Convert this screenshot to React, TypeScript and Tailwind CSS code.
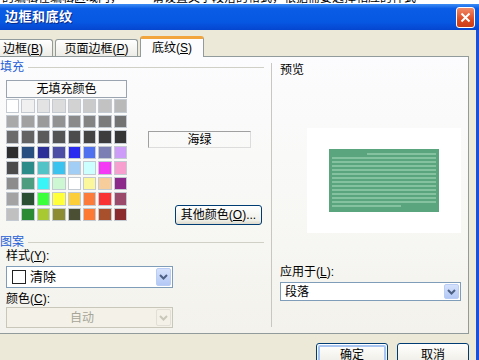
import React from 'react'

const font = "font-['Liberation_Sans','Noto_Sans_CJK_SC',sans-serif]"

// Word 2003 shading palette, 8 x 8
const palette = [
  ['#ffffff', '#f0f0f0', '#e3e3e3', '#dcdcdc', '#d2d2d2', '#cacaca', '#c2c2c2', '#b9b9b9'],
  ['#a9a9a9', '#a1a1a1', '#9a9a9a', '#929292', '#8a8a8a', '#838383', '#7b7b7b', '#737373'],
  ['#6b6b6b', '#636363', '#5b5b5b', '#545454', '#4c4c4c', '#444444', '#3d3d3d', '#353535'],
  ['#2d2d2d', '#284f7f', '#2b2f97', '#4c4ea5', '#2b2bef', '#4f71f0', '#7b7fb3', '#cc9cf8'],
  ['#4b4b4b', '#2b8b88', '#52c3c7', '#3ac3ef', '#a2cdf5', '#ccffff', '#f53af5', '#f7a0d0'],
  ['#8c8c8c', '#4f9d80', '#3af5f7', '#cdf7d2', '#ffffff', '#fbf79c', '#f7cd9c', '#8c2a8c'],
  ['#a3a3a3', '#2b4f33', '#3aff3a', '#ffff3a', '#fcce3a', '#fc7a3a', '#f93333', '#9c4a6c'],
  ['#c0c0c0', '#2b8b35', '#a9c933', '#8c8c33', '#4b4f33', '#fc7a33', '#a84f2b', '#8c2b2b'],
]

function Chevron({ color }: { color: string }) {
  return (
    <svg width="9" height="6" viewBox="0 0 9 6">
      <path d="M1 1 L4.5 4.5 L8 1" fill="none" stroke={color} strokeWidth="2" />
    </svg>
  )
}

function Combo({
  children,
  disabled,
  className,
}: {
  children: React.ReactNode
  disabled?: boolean
  className: string
}) {
  return (
    <div
      className={`shrink-0 flex items-stretch border p-[1px] ${
        disabled ? 'border-[#c9c7ba] bg-[#f3f1e8]' : 'border-[#7f9db9] bg-white'
      } ${className}`}
    >
      <div className="flex-1 flex items-center min-w-0">{children}</div>
      <div
        className={`w-[15px] flex items-center justify-center rounded-[2px] border ${
          disabled
            ? 'border-[#e2e0d6] bg-[#f3f1e8]'
            : 'border-[#b9cdf5] bg-[linear-gradient(to_bottom,#d6e2fc,#b3c8f5)]'
        }`}
      >
        <Chevron color={disabled ? '#c9c7ba' : '#4d6185'} />
      </div>
    </div>
  )
}

function GroupHeader({ label }: { label: string }) {
  return (
    <div className="shrink-0 flex items-center h-[14px]">
      <span className="text-[12px] leading-[14px] text-[#1f5fd6]">{label}</span>
      <div className="flex-1 h-px bg-[#d0d0c6] ml-[4px]" />
    </div>
  )
}

function XpButton({ children, isDefault }: { children: React.ReactNode; isDefault?: boolean }) {
  return (
    <div className="shrink-0 w-[72px] h-[23px] rounded-[3px] border border-[#003c74] bg-[linear-gradient(to_bottom,#ffffff,#f0efe8_80%,#dedbcf)] p-[1px]">
      <div
        className={`h-full rounded-[2px] flex items-center justify-center text-[12px] text-black ${
          isDefault ? 'border-2 border-[#a8c4f0]' : ''
        }`}
      >
        {children}
      </div>
    </div>
  )
}

export default function App() {
  return (
    <div className={`w-[479px] h-[360px] overflow-hidden flex flex-col bg-[#ece9d8] ${font}`}>
      {/* Document text behind the dialog, only its bottom edge shows */}
      <div className="shrink-0 h-[4px] bg-white overflow-hidden flex gap-[30px] pl-[2px]">
        <span className="text-[12px] leading-[12px] mt-[-8px] text-black whitespace-nowrap">
          的编辑在编辑区域内，
        </span>
        <span className="text-[12px] leading-[12px] mt-[-8px] text-black whitespace-nowrap">
          请设置文字段落的格式，根据需要选择相应的样式
        </span>
      </div>

      {/* Title bar */}
      <div className="shrink-0 h-[26px] flex items-center justify-between pl-[5px] pr-[4px] bg-[linear-gradient(to_bottom,#3d8df5_0%,#0a5ce6_18%,#0657e2_70%,#0545cf_100%)]">
        <span className="text-[13px] font-bold text-white tracking-[0.5px] [text-shadow:1px_1px_0_#0a2a8a]">
          边框和底纹
        </span>
        <div className="w-[19px] h-[21px] rounded-[3px] border border-white bg-[linear-gradient(to_bottom,#f08a68,#dd4a22_60%,#c83c18)] flex items-center justify-center">
          <svg width="11" height="11" viewBox="0 0 11 11">
            <path d="M1.5 1.5 L9.5 9.5 M9.5 1.5 L1.5 9.5" stroke="white" strokeWidth="2" />
          </svg>
        </div>
      </div>

      {/* Dialog body */}
      <div className="shrink-0 h-[330px] flex flex-col pt-[6px] pr-[7px] border-r-[3px] border-[#1b4fd8]">
        {/* Tabs */}
        <div className="shrink-0 flex items-end ml-[-4px] h-[21px]">
          <div className="w-[57px] h-[18px] rounded-t-[3px] border border-b-0 border-[#919b9c] bg-[linear-gradient(to_bottom,#ffffff,#ecebe5)] flex items-center pl-[6px] text-[12px] text-black">
            边框(<u>B</u>)
          </div>
          <div className="ml-[2px] w-[83px] h-[18px] rounded-t-[3px] border border-b-0 border-[#919b9c] bg-[linear-gradient(to_bottom,#ffffff,#ecebe5)] flex items-center justify-center text-[12px] text-black">
            页面边框(<u>P</u>)
          </div>
          <div className="relative z-10 ml-[2px] w-[64px] h-[21px] rounded-t-[3px] border-x border-[#919b9c] border-t-[3px] border-t-[#f1a53c] bg-[#fcfcfe] flex items-center justify-center text-[12px] text-black">
            底纹(<u>S</u>)
          </div>
        </div>

        {/* Tab panel */}
        <div className="shrink-0 mt-[-1px] ml-[-4px] h-[278px] border border-[#919b9c] bg-[linear-gradient(to_bottom,#fcfcfe,#f7f7f4_60%,#f3f2ec)] flex pl-[3px]">
          {/* Left: fill + pattern */}
          <div className="w-[272px] flex flex-col pr-[7px] pt-[3px]">
            <GroupHeader label="填充" />
            <div className="shrink-0 flex ml-[6px] mt-[6px]">
              <div className="w-[121px] flex flex-col">
                <div className="h-[18px] border border-[#9aa4b0] bg-[#fbfbfb] flex items-center justify-center text-[12px] text-black">
                  无填充颜色
                </div>
                <div className="mt-[1px] w-[121px] h-[122px] grid grid-cols-8 grid-rows-8 gap-[2px]">
                  {palette.flat().map((c, i) => (
                    <div
                      key={i}
                      className="border border-[#c4cad2]"
                      style={{ backgroundColor: c }}
                    />
                  ))}
                </div>
              </div>
              <div className="flex-1 flex flex-col pl-[21px]">
                <div className="mt-[51px] w-[103px] h-[17px] border border-[#a0a0a0] border-b-[#dcdcdc] border-r-[#dcdcdc] flex items-center justify-center text-[12px] text-black">
                  海绿
                </div>
                <div className="mt-[57px] self-end mr-[2px] w-[87px] h-[20px] rounded-[3px] border border-[#003c74] bg-[linear-gradient(to_bottom,#ffffff,#efeee7_80%,#dcd9cc)] flex items-center justify-center text-[12px] text-black whitespace-nowrap">
                  其他颜色(<u>O</u>)...
                </div>
              </div>
            </div>

            <div className="shrink-0 mt-[10px]">
              <GroupHeader label="图案" />
            </div>
            <div className="shrink-0 ml-[6px] h-[14px] text-[12px] leading-[14px] text-black">
              样式(<u>Y</u>):
            </div>
            <Combo className="ml-[6px] mt-[3px] w-[167px] h-[22px]">
              <div className="ml-[4px] w-[14px] h-[14px] border border-[#222] bg-white" />
              <span className="ml-[4px] text-[13px] text-black">清除</span>
            </Combo>
            <div className="shrink-0 ml-[6px] mt-[4px] h-[14px] text-[12px] leading-[14px] text-black">
              颜色(<u>C</u>):
            </div>
            <Combo disabled className="ml-[6px] mt-[1px] w-[167px] h-[21px]">
              <span className="flex-1 text-center text-[12px] text-[#a7a597]">自动</span>
            </Combo>
          </div>

          {/* Separator */}
          <div className="w-px my-[6px] bg-[#c8c8c0]" />

          {/* Right: preview */}
          <div className="flex-1 flex flex-col pl-[8px] pr-[7px] pt-[6px]">
            <div className="shrink-0 h-[14px] text-[12px] leading-[14px] text-black">预览</div>
            <div className="shrink-0 mt-[51px] ml-[27px] w-[154px] h-[105px] bg-white flex items-center justify-center">
              <div className="w-[110px] h-[63px] bg-[#5aa47e] flex flex-col gap-[2px] px-[3px] pt-[4px]">
                <div className="h-[2px] ml-[35px] bg-[#85c2a0]" />
                {Array.from({ length: 12 }).map((_, i) => (
                  <div key={i} className="h-[2px] bg-[#85c2a0]" />
                ))}
                <div className="h-[2px] w-[69px] bg-[#85c2a0]" />
              </div>
            </div>
            <div className="shrink-0 mt-[32px] h-[14px] text-[12px] leading-[14px] text-black">
              应用于(<u>L</u>):
            </div>
            <Combo className="mt-[3px] h-[19px]">
              <span className="ml-[3px] text-[12px] text-black">段落</span>
            </Combo>
          </div>
        </div>

        {/* Buttons */}
        <div className="shrink-0 mt-[9px] flex justify-end gap-[9px]">
          <XpButton isDefault>确定</XpButton>
          <XpButton>取消</XpButton>
        </div>
      </div>
    </div>
  )
}
